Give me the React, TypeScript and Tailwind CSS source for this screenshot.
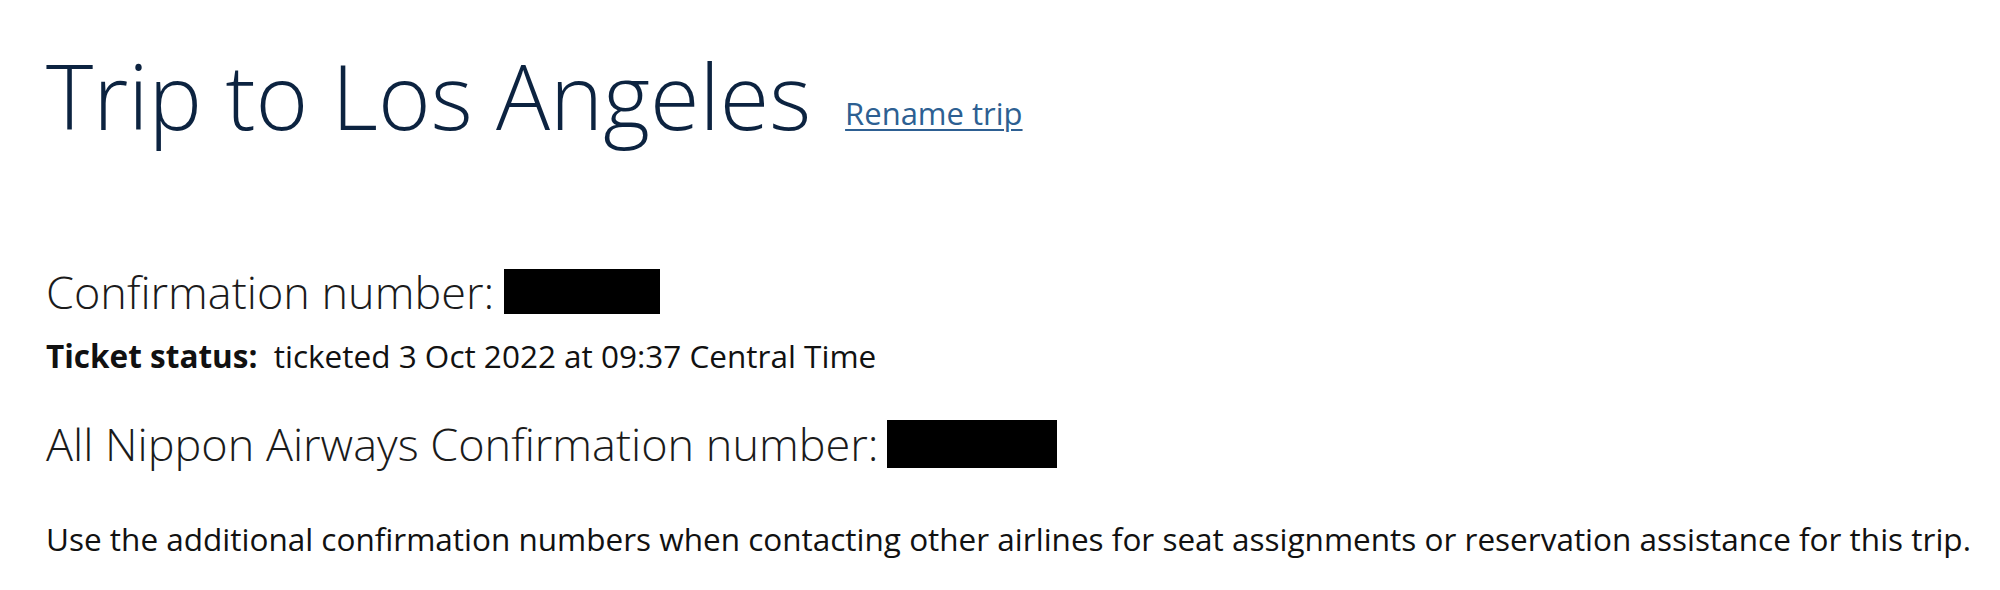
export default function App() {
  return (
    <main className="min-h-screen bg-white pl-[46px] pt-[50px] text-[#1b1b1b] [font-family:'Open_Sans',sans-serif]">
      {/* Trip title */}
      <div className="flex items-baseline gap-[34px]">
        <h1 className="text-[90px] leading-none font-light text-[#0c2340]">Trip to Los Angeles</h1>
        <a href="#" className="relative -top-[5px] text-[31px] leading-none text-[#2d5f92] underline underline-offset-[4px] decoration-[2px]">
          Rename trip
        </a>
      </div>

      {/* Confirmation */}
      <div className="mt-[129px] flex items-center">
        <span className="text-[45px] leading-none font-light">Confirmation number:</span>
        <span className="ml-[10px] h-[45px] w-[156px] bg-black"></span>
      </div>
      <p className="mt-[26px] text-[31.5px] leading-none text-[#111]">
        <span className="font-bold">Ticket status:</span>&nbsp; ticketed 3 Oct 2022 at 09:37 Central Time
      </p>

      <div className="mt-[48px] flex items-center">
        <span className="text-[45px] leading-none font-light">All Nippon Airways Confirmation number:</span>
        <span className="ml-[9px] h-[48px] w-[170px] bg-black"></span>
      </div>

      <p className="mt-[55px] text-[31.5px] leading-none text-[#111]">
        Use the additional confirmation numbers when contacting other airlines for seat assignments or reservation assistance for this trip.
      </p>
    </main>
  );
}
